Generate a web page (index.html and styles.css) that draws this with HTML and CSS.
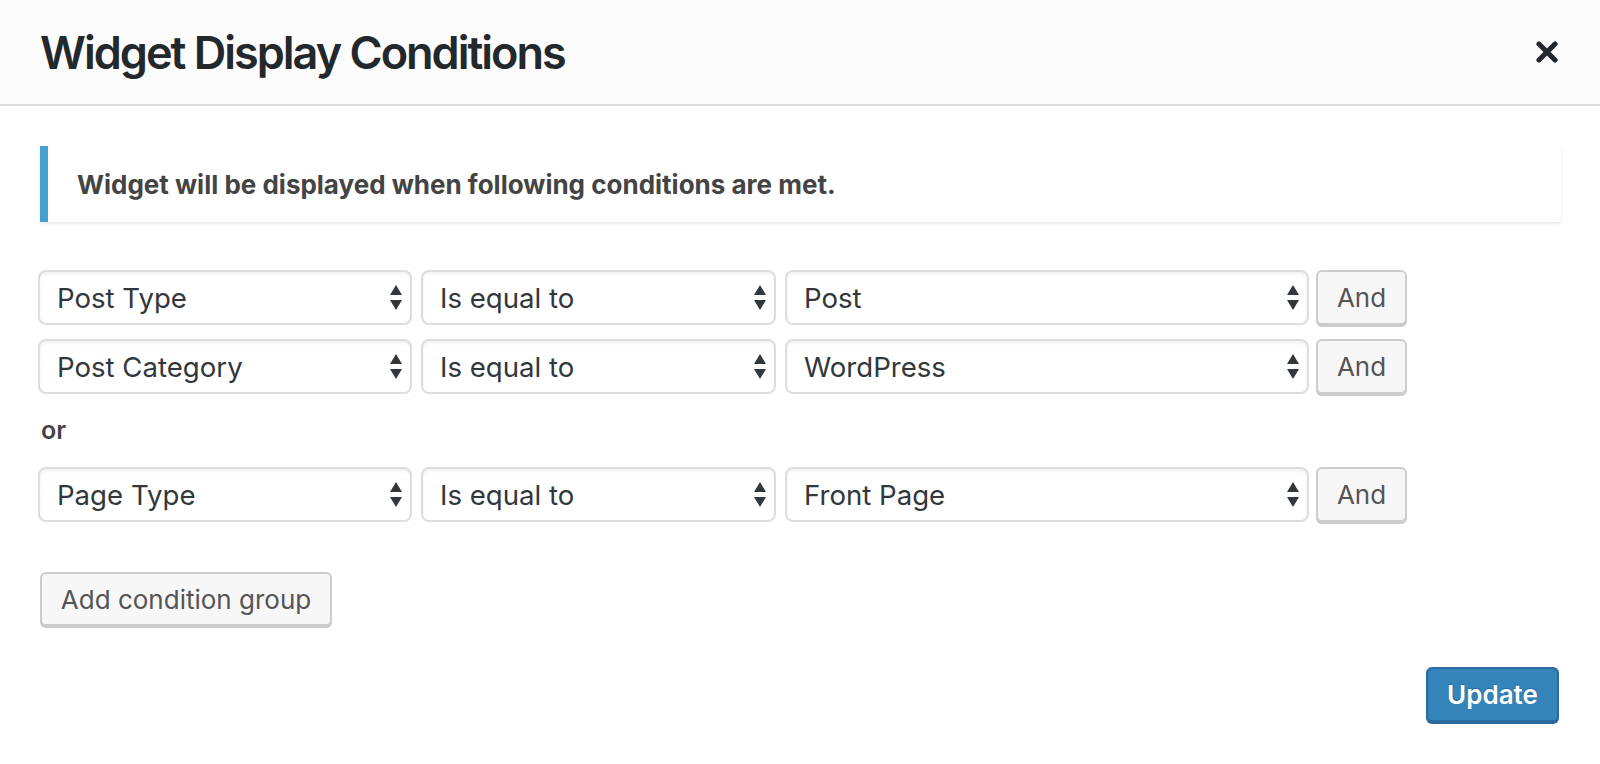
FILE: index.html
```html
<!DOCTYPE html>
<html lang="en">
<head>
<meta charset="utf-8">
<title>Widget Display Conditions</title>
<link rel="stylesheet" href="styles.css">
</head>
<body>
<div class="modal">
  <header class="modal-header">
    <h1 class="modal-title">Widget Display Conditions</h1>
    <button class="close" aria-label="Close">
      <svg width="22" height="22" viewBox="0 0 22 22"><path d="M3 3 L19 19 M19 3 L3 19" stroke="#23282d" stroke-width="5.2" stroke-linecap="round" fill="none"/></svg>
    </button>
  </header>
  <main class="modal-body">
    <div class="notice">Widget will be displayed when following conditions are met.</div>

    <div class="group">
      <div class="row">
        <div class="select s1"><span>Post Type</span><svg class="arrows" width="12" height="25" viewBox="0 0 12 25"><path d="M6 0 L12 10 L0 10 Z M0 15 L12 15 L6 25 Z" fill="#32373c"/></svg></div>
        <div class="select s2"><span>Is equal to</span><svg class="arrows" width="12" height="25" viewBox="0 0 12 25"><path d="M6 0 L12 10 L0 10 Z M0 15 L12 15 L6 25 Z" fill="#32373c"/></svg></div>
        <div class="select s3"><span>Post</span><svg class="arrows" width="12" height="25" viewBox="0 0 12 25"><path d="M6 0 L12 10 L0 10 Z M0 15 L12 15 L6 25 Z" fill="#32373c"/></svg></div>
        <button class="btn and">And</button>
      </div>
      <div class="row">
        <div class="select s1"><span>Post Category</span><svg class="arrows" width="12" height="25" viewBox="0 0 12 25"><path d="M6 0 L12 10 L0 10 Z M0 15 L12 15 L6 25 Z" fill="#32373c"/></svg></div>
        <div class="select s2"><span>Is equal to</span><svg class="arrows" width="12" height="25" viewBox="0 0 12 25"><path d="M6 0 L12 10 L0 10 Z M0 15 L12 15 L6 25 Z" fill="#32373c"/></svg></div>
        <div class="select s3"><span>WordPress</span><svg class="arrows" width="12" height="25" viewBox="0 0 12 25"><path d="M6 0 L12 10 L0 10 Z M0 15 L12 15 L6 25 Z" fill="#32373c"/></svg></div>
        <button class="btn and">And</button>
      </div>
    </div>

    <div class="or">or</div>

    <div class="group">
      <div class="row">
        <div class="select s1"><span>Page Type</span><svg class="arrows" width="12" height="25" viewBox="0 0 12 25"><path d="M6 0 L12 10 L0 10 Z M0 15 L12 15 L6 25 Z" fill="#32373c"/></svg></div>
        <div class="select s2"><span>Is equal to</span><svg class="arrows" width="12" height="25" viewBox="0 0 12 25"><path d="M6 0 L12 10 L0 10 Z M0 15 L12 15 L6 25 Z" fill="#32373c"/></svg></div>
        <div class="select s3"><span>Front Page</span><svg class="arrows" width="12" height="25" viewBox="0 0 12 25"><path d="M6 0 L12 10 L0 10 Z M0 15 L12 15 L6 25 Z" fill="#32373c"/></svg></div>
        <button class="btn and">And</button>
      </div>
    </div>

    <div class="add-wrap">
      <button class="btn add">Add condition group</button>
    </div>

    <div class="footer">
      <button class="btn primary">Update</button>
    </div>
  </main>
</div>
</body>
</html>
```

FILE: styles.css
```css
html, body {
  margin: 0;
  padding: 0;
  background: #ffffff;
}

body {
  font-family: Inter, "Noto Sans", "Liberation Sans", sans-serif;
  color: #32373c;
}

.modal {
  width: 1600px;
  height: 764px;
  background: #ffffff;
}

.modal-header {
  box-sizing: border-box;
  height: 106px;
  background: #fcfcfc;
  border-bottom: 2px solid #dddddd;
  display: flex;
  align-items: center;
  justify-content: space-between;
  padding: 0 42px 0 40px;
}

.modal-title {
  margin: 0;
  font-size: 45px;
  font-weight: 600;
  letter-spacing: -2px;
  color: #23282d;
  line-height: 1;
}

.close {
  border: 0;
  background: transparent;
  padding: 0;
  width: 22px;
  height: 22px;
  display: flex;
}

.modal-body {
  padding: 40px 39px 0 40px;
}

.notice {
  box-sizing: border-box;
  height: 76px;
  background: #ffffff;
  border-left: 8px solid #46a0d4;
  box-shadow: 0 2px 3px rgba(0, 0, 0, 0.09);
  display: flex;
  align-items: center;
  padding-left: 29px;
  font-size: 26px;
  font-weight: 700;
  color: #444444;
}

.group {
  margin-top: 48px;
  margin-left: -2px;
  display: flex;
  flex-direction: column;
  gap: 14px;
}

.or + .group {
  margin-top: 0;
}

.row {
  display: flex;
  align-items: flex-start;
  height: 55px;
}

.select {
  box-sizing: border-box;
  height: 55px;
  border: 2px solid #dddddd;
  border-radius: 8px;
  background: #ffffff;
  box-shadow: inset 0 2px 3px rgba(0, 0, 0, 0.06);
  display: flex;
  align-items: center;
  justify-content: space-between;
  padding: 0 8px 0 17px;
  font-size: 27.6px;
  color: #32373c;
  margin-right: 9px;
}

.s1 { width: 374px; }
.s2 { width: 355px; }
.s3 { width: 524px; margin-right: 7px; }

.arrows {
  display: block;
}

.btn {
  box-sizing: border-box;
  font-family: inherit;
  border-radius: 6px;
  cursor: pointer;
}

.and,
.add {
  height: 55px;
  background: #f7f7f7;
  border: 2px solid #cccccc;
  box-shadow: 0 2px 0 #cccccc;
  color: #555555;
  font-size: 26px;
  padding: 0;
}

.and {
  width: 91px;
}

.or {
  height: 34px;
  padding: 19px 0 20px 1px;
  font-size: 25px;
  font-weight: 600;
  line-height: 34px;
  color: #444444;
}

.add-wrap {
  margin-top: 50px;
}

.add {
  width: 292px;
  height: 54px;
}

.footer {
  display: flex;
  justify-content: flex-end;
  margin-top: 41px;
  padding-right: 2px;
}

.primary {
  width: 133px;
  height: 55px;
  background: #3483b9;
  border: 2px solid #2b6c9c;
  box-shadow: 0 2px 0 #2b6c9c;
  color: #ffffff;
  font-size: 26px;
  font-weight: 600;
  text-shadow: 0 -1px 1px #2b6c9c;
  padding: 0;
}
```
